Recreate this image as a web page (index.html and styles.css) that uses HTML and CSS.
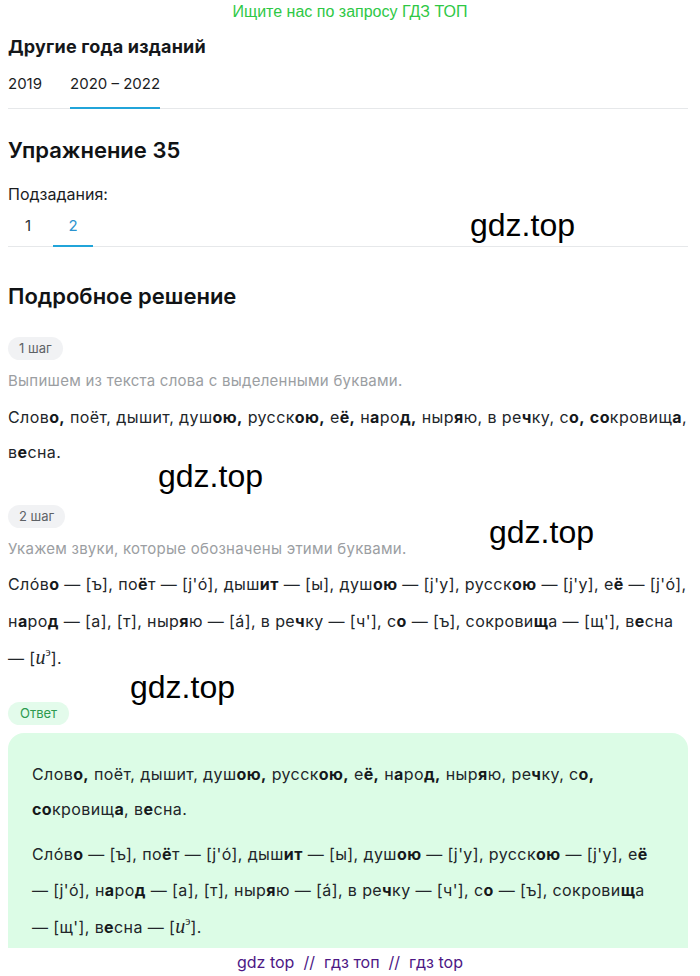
FILE: index.html
```html
<!DOCTYPE html>
<html lang="ru">
<head>
<meta charset="utf-8">
<title>Упражнение 35</title>
<link rel="stylesheet" href="styles.css">
</head>
<body>
<div class="promo">Ищите нас по запросу ГДЗ ТОП</div>
<main class="page">
  <h2 class="years-title">Другие года изданий</h2>
  <div class="tabs">
    <span class="tab">2019</span>
    <span class="tab active">2020 – 2022</span>
  </div>

  <h1 class="title">Упражнение 35</h1>
  <div class="sub-label">Подзадания:</div>
  <div class="subtabs">
    <span class="subtab">1</span>
    <span class="subtab active">2</span>
  </div>

  <h2 class="section-title">Подробное решение</h2>

  <div class="pill">1 шаг</div>
  <p class="hint">Выпишем из текста слова с выделенными буквами.</p>
  <p class="text t1">Слов<b>о,</b> поёт, дышит, душ<b>ою,</b> русск<b>ою,</b> е<b>ё,</b> н<b>а</b>ро<b>д,</b> ныр<b>я</b>ю, в ре<b>ч</b>ку, с<b>о,</b> <b>со</b>кровищ<b>а</b>, в<b>е</b>сна.</p>

  <div class="pill pill2">2 шаг</div>
  <p class="hint">Укажем звуки, которые обозначены этими буквами.</p>
  <p class="text t2">Сло́в<b>о</b> — [ъ], по<b>ё</b>т — [j'о́], дыш<b>ит</b> — [ы], душ<b>ою</b> — [j'у], русск<b>ою</b> — [j'у], е<b>ё</b> — [j'о́], н<b>а</b>ро<b>д</b> — [а], [т], ныр<b>я</b>ю — [а́], в ре<b>ч</b>ку — [ч'], с<b>о</b> — [ъ], сокрови<b>щ</b>а — [щ'], в<b>е</b>сна — [<i class="ipa">и<sup>э</sup></i>].</p>

  <div class="pill answer-pill">Ответ</div>
  <section class="answer">
    <p class="text a1">Слов<b>о,</b> поёт, дышит, душ<b>ою,</b> русск<b>ою,</b> е<b>ё,</b> н<b>а</b>ро<b>д,</b> ныр<b>я</b>ю, ре<b>ч</b>ку, с<b>о,</b> <b>со</b>кровищ<b>а</b>, в<b>е</b>сна.</p>
    <p class="text a2">Сло́в<b>о</b> — [ъ], по<b>ё</b>т — [j'о́], дыш<b>ит</b> — [ы], душ<b>ою</b> — [j'у], русск<b>ою</b> — [j'у], е<b>ё</b> — [j'о́], н<b>а</b>ро<b>д</b> — [а], [т], ныр<b>я</b>ю — [а́], в ре<b>ч</b>ку — [ч'], с<b>о</b> — [ъ], сокрови<b>щ</b>а — [щ'], в<b>е</b>сна — [<i class="ipa">и<sup>э</sup></i>].</p>
  </section>
</main>
<footer class="footer">gdz top &nbsp;//&nbsp; гдз топ &nbsp;//&nbsp; гдз top</footer>

<div class="wm wm1">gdz.top</div>
<div class="wm wm2">gdz.top</div>
<div class="wm wm3">gdz.top</div>
<div class="wm wm4">gdz.top</div>
</body>
</html>
```
FILE: styles.css
```css
* { box-sizing: border-box; }
html, body { margin: 0; padding: 0; background: #fff; }
body {
  position: relative;
  font-family: Inter, "Noto Sans", sans-serif;
  color: #1b1d1f;
  font-size: 16px;
}
.promo {
  height: 24px;
  line-height: 24px;
  text-align: center;
  font-family: "Liberation Sans", Arial, sans-serif;
  font-size: 16px;
  color: #2ec845;
}
.page { padding: 0 12px 0 8px; }
h1, h2, p { margin: 0; }
.years-title {
  margin-top: 11px;
  font-size: 18px;
  line-height: 24px;
  font-weight: 700;
  color: #15171a;
  letter-spacing: 0.2px;
}
.tabs {
  display: flex;
  gap: 28px;
  margin-top: 13px;
  border-bottom: 1px solid #e6e8ea;
}
.tab {
  line-height: 24px;
  padding-bottom: 12px;
  font-size: 15px;
  color: #1b1d1f;
}
.tab.active {
  border-bottom: 2px solid #21a4d9;
  padding-bottom: 10px;
  margin-bottom: -1px;
}
.title {
  margin-top: 27px;
  font-size: 22px;
  line-height: 28px;
  font-weight: 600;
  color: #111315;
}
.sub-label {
  margin-top: 18px;
  line-height: 24px;
  font-size: 16px;
}
.subtabs {
  display: flex;
  gap: 5px;
  margin-top: 8px;
  border-bottom: 1px solid #e6e8ea;
}
.subtab {
  width: 40px;
  text-align: center;
  line-height: 24px;
  padding-bottom: 8px;
  font-size: 15px;
  color: #2a2f33;
}
.subtab.active {
  color: #2b93cf;
  border-bottom: 2px solid #21a4d9;
  padding-bottom: 6px;
  margin-bottom: -1px;
}
.section-title {
  margin-top: 35px;
  font-size: 22px;
  line-height: 28px;
  font-weight: 600;
  color: #111315;
}
.pill {
  display: inline-block;
  margin-top: 27px;
  height: 23px;
  line-height: 23px;
  padding: 0 11px;
  border-radius: 12px;
  background: #f1f2f4;
  color: #5e6266;
  font-size: 13px;
}
.pill2 { margin-top: 35px; }
.hint {
  margin-top: 9px;
  line-height: 24px;
  font-size: 15px;
  color: #9b9ea2;
  letter-spacing: 0.25px;
}
.text { font-size: 16px; color: #22262a; letter-spacing: 0.4px; }
.text b { font-weight: 700; color: #15181b; }
.t1 { margin-top: 7px; line-height: 35px; }
.t2 { margin-top: 5px; line-height: 36.5px; }
.ipa {
  font-family: "Liberation Serif", "Times New Roman", serif;
  font-style: italic;
  font-size: 20px;
  letter-spacing: 0;
}
.ipa sup { font-size: 12px; font-style: normal; vertical-align: 8px; line-height: 0; }
.answer-pill {
  margin-top: 25px;
  background: #e3fbeb;
  color: #2c9a4f;
  padding: 0 12px;
}
.answer {
  margin-top: 8px;
  background: #dcfce6;
  border-radius: 16px 16px 0 0;
  padding: 24px 24px 3px 24px;
}
.a1 { line-height: 35px; }
.a2 { margin-top: 9px; line-height: 36px; }
.footer {
  height: 28px;
  line-height: 28px;
  text-align: center;
  font-size: 16px;
  color: #4d1885;
}
.wm {
  position: absolute;
  font-family: "Liberation Sans", Arial, sans-serif;
  font-size: 32px;
  line-height: 32px;
  color: #000;
  pointer-events: none;
}
.wm1 { left: 470px; top: 209px; }
.wm2 { left: 489px; top: 516px; }
.wm3 { left: 158px; top: 460px; }
.wm4 { left: 130px; top: 671px; }
```
